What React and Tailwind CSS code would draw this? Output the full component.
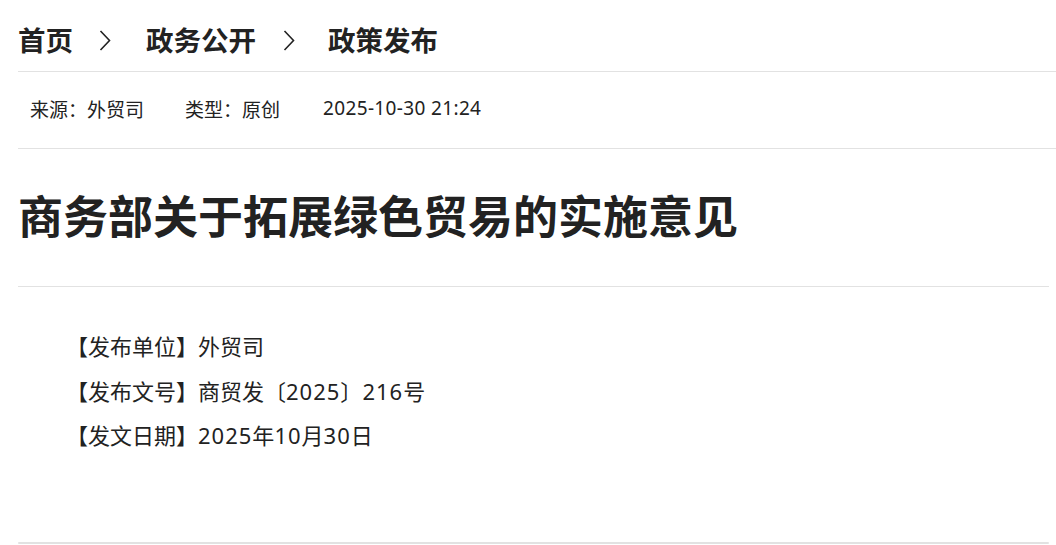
export default function App() {
  const font = { fontFamily: '"Noto Sans", "Noto Sans CJK SC", sans-serif' };
  const cjk = { fontFamily: '"Noto Sans CJK SC", "Noto Sans", sans-serif' };
  const Chevron = () => (
    <svg width="12" height="21" viewBox="0 0 12 21" fill="none" className="shrink-0">
      <polyline points="1.5,1 10.5,10.5 1.5,20" stroke="#222" strokeWidth="1.6" fill="none" />
    </svg>
  );
  return (
    <div className="w-[1056px] h-[545px] bg-white overflow-hidden text-[#222]" style={font}>
      <div className="pl-[18px]">
        <div className="h-[71px] flex items-center pt-[9px] text-[27.5px] font-bold leading-none" style={cjk}>
          <span>首页</span>
          <span className="ml-[26px] mr-[35px] flex items-center"><Chevron /></span>
          <span>政务公开</span>
          <span className="ml-[27px] mr-[33px] flex items-center"><Chevron /></span>
          <span>政策发布</span>
        </div>
        <div className="h-px bg-[#e2e2e2]" />
        <div className="h-[76px] flex items-center pb-[4px] pl-[12px] text-[19px] leading-none text-[#222]">
          <span style={cjk}>来源：外贸司</span>
          <span className="ml-[41px]" style={cjk}>类型：原创</span>
          <span className="ml-[43px] tracking-[0.35px]">2025-10-30 21:24</span>
        </div>
        <div className="h-px bg-[#e2e2e2]" />
      </div>
      <div className="pl-[18px] w-[1049px]">
        <div className="h-[137px] flex items-center pb-[7px]">
          <h1 className="text-[45px] font-bold leading-none text-[#222]" style={cjk}>商务部关于拓展绿色贸易的实施意见</h1>
        </div>
        <div className="h-px bg-[#e2e2e2]" />
        <div className="h-[255px] pt-[37px] pl-[48px] text-[22px] leading-[44.5px] text-[#222]">
          <p>【发布单位】外贸司</p>
          <p>【发布文号】商贸发〔<span className="tracking-[1px]">2025</span>〕<span className="tracking-[1px]">216</span>号</p>
          <p>【发文日期】<span className="tracking-[1px]">2025</span>年<span className="tracking-[1px]">10</span>月<span className="tracking-[1px]">30</span>日</p>
        </div>
        <div className="h-[2px] bg-[#e2e2e2] rounded-full" />
      </div>
    </div>
  );
}
